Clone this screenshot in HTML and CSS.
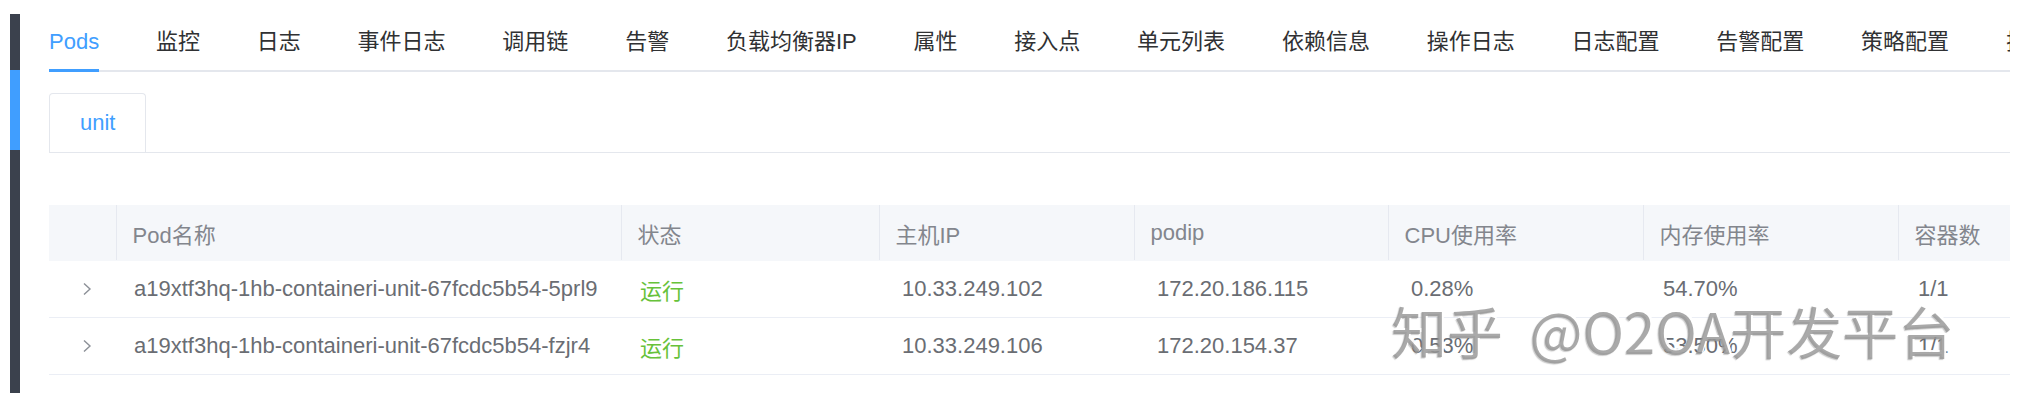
FILE: index.html
```html
<!DOCTYPE html>
<html lang="zh-CN">
<head>
<meta charset="utf-8">
<title>Pods</title>
<link rel="stylesheet" href="styles.css">
</head>
<body>
<div class="page">
  <div class="side"><div class="side-active"></div></div>
  <div class="main">
    <div class="tabs">
      <div class="tab active">Pods</div>
      <div class="tab">监控</div>
      <div class="tab">日志</div>
      <div class="tab">事件日志</div>
      <div class="tab">调用链</div>
      <div class="tab">告警</div>
      <div class="tab">负载均衡器IP</div>
      <div class="tab">属性</div>
      <div class="tab">接入点</div>
      <div class="tab">单元列表</div>
      <div class="tab">依赖信息</div>
      <div class="tab">操作日志</div>
      <div class="tab">日志配置</div>
      <div class="tab">告警配置</div>
      <div class="tab">策略配置</div>
      <div class="tab">扩缩容配置</div>
    </div>
    <div class="subtabs">
      <div class="subtab">unit</div>
    </div>
    <table class="pods">
      <colgroup>
        <col class="c-exp"><col class="c-name"><col class="c-status"><col class="c-w"><col class="c-w2"><col class="c-w"><col class="c-w"><col class="c-w">
      </colgroup>
      <thead>
        <tr>
          <th class="exp"></th>
          <th>Pod名称</th>
          <th>状态</th>
          <th>主机IP</th>
          <th>podip</th>
          <th>CPU使用率</th>
          <th>内存使用率</th>
          <th>容器数</th>
        </tr>
      </thead>
      <tbody>
        <tr>
          <td class="exp"><svg class="chev" width="10" height="16" viewBox="0 0 10 16"><polyline points="2,2.5 8,8 2,13.5" fill="none" stroke="#8c9097" stroke-width="1.4"/></svg></td>
          <td class="name">a19xtf3hq-1hb-containeri-unit-67fcdc5b54-5prl9</td>
          <td class="status">运行</td>
          <td class="num">10.33.249.102</td>
          <td class="num">172.20.186.115</td>
          <td class="num">0.28%</td>
          <td class="num2">54.70%</td>
          <td class="num2">1/1</td>
        </tr>
        <tr>
          <td class="exp"><svg class="chev" width="10" height="16" viewBox="0 0 10 16"><polyline points="2,2.5 8,8 2,13.5" fill="none" stroke="#8c9097" stroke-width="1.4"/></svg></td>
          <td class="name">a19xtf3hq-1hb-containeri-unit-67fcdc5b54-fzjr4</td>
          <td class="status">运行</td>
          <td class="num">10.33.249.106</td>
          <td class="num">172.20.154.37</td>
          <td class="num">0.53%</td>
          <td class="num2">53.50%</td>
          <td class="num2">1/1</td>
        </tr>
      </tbody>
    </table>
  </div>
  <div class="watermark">知乎 @O2OA开发平台</div>
</div>
</body>
</html>
```

FILE: styles.css
```css
html, body {
  margin: 0;
  padding: 0;
  background: #ffffff;
}

body {
  font-family: "Liberation Sans", "Noto Sans CJK SC", sans-serif;
  font-size: 22px;
  color: #303133;
}

.page {
  position: relative;
  display: flex;
  align-items: flex-start;
  padding-top: 14px;
  height: 400px;
  box-sizing: border-box;
}

.side {
  margin-left: 10px;
  width: 10px;
  height: 379px;
  background: #3b414d;
  padding-top: 56px;
  box-sizing: border-box;
  flex: none;
}

.side-active {
  height: 80px;
  background: #409eff;
}

.main {
  margin-left: 29px;
  width: 1961px;
  overflow: hidden;
  flex: none;
}

/* top tabs */
.tabs {
  display: flex;
  flex-wrap: nowrap;
  border-bottom: 2px solid #e4e7ed;
  height: 56px;
}

.tab {
  position: relative;
  flex: none;
  height: 56px;
  line-height: 56px;
  padding: 0 28.4px;
  white-space: nowrap;
  color: #303133;
}

.tab:first-child {
  padding-left: 0;
}

.tab.active {
  color: #409eff;
}

.tab.active::after {
  content: "";
  position: absolute;
  left: 0;
  right: 28.4px;
  bottom: -2px;
  height: 3px;
  background: #409eff;
}

/* card sub tabs */
.subtabs {
  margin-top: 21px;
  display: flex;
  border-bottom: 1px solid #e4e7ed;
}

.subtab {
  height: 58px;
  line-height: 58px;
  padding: 0 30px;
  border: 1px solid #e4e7ed;
  border-bottom: none;
  border-radius: 4px 4px 0 0;
  color: #409eff;
}

/* table */
.pods {
  margin-top: 52px;
  width: 2104px;
  table-layout: fixed;
  border-collapse: collapse;
  border-spacing: 0;
}

.c-exp { width: 67px; }
.c-name { width: 505px; }
.c-status { width: 258px; }
.c-w { width: 255px; }
.c-w2 { width: 254px; }

.pods th {
  height: 55px;
  padding: 0 0 0 16px;
  text-align: left;
  font-weight: normal;
  color: #83868d;
  background: #f5f7fa;
  border-left: 1px solid #e6e9f0;
  border-bottom: 1px solid #f5f7fa;
  white-space: nowrap;
  overflow: hidden;
}

.pods th.exp {
  border-left: none;
}

.pods td {
  height: 56px;
  padding: 0 0 0 18px;
  color: #6a6d73;
  border-bottom: 1px solid #ebeef5;
  white-space: nowrap;
  overflow: hidden;
}

.pods td.exp {
  padding-left: 33px;
}

.chev {
  display: block;
}

.pods td.name {
  padding-left: 18px;
}

.pods td.status {
  padding-left: 19px;
  color: #67c23a;
}

.pods td.num {
  padding-left: 23px;
}

.pods td.num2 {
  padding-left: 20px;
}

/* zhihu watermark overlay */
.watermark {
  position: absolute;
  left: 1391px;
  top: 298px;
  font-family: "Noto Sans CJK SC", sans-serif;
  font-weight: 400;
  font-size: 56px;
  line-height: 64px;
  word-spacing: 14px;
  white-space: nowrap;
  color: rgba(150, 150, 150, 0.82);
  text-shadow: 2px -2px 0 rgba(255, 255, 255, 0.95), -1px 1px 1px rgba(110, 110, 110, 0.35);
}
```
